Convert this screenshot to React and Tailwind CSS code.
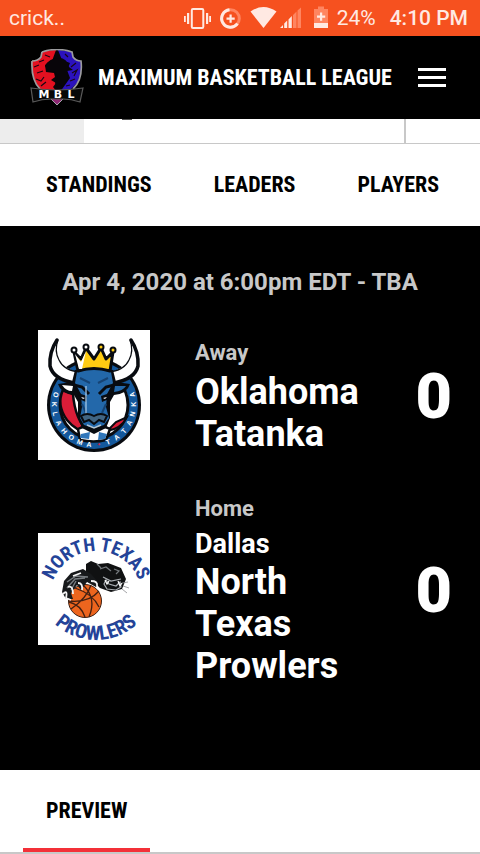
import React from "react";

const condensed =
  "font-['Roboto_Condensed','Liberation_Sans_Narrow',Roboto,sans-serif] font-bold text-[22px] leading-[26px] whitespace-nowrap";

function StatusIcons() {
  return (
    <svg width="146" height="36" viewBox="183 0 146 36" fill="#ffe9e2" aria-hidden="true">
      <rect x="191.8" y="9" width="11.5" height="19" rx="1.2" fill="none" stroke="#ffe9e2" strokeWidth="2" />
      <path d="M187 13h2.2v11h-2.2zM184 16h1.8v6h-1.8zM206 13h2.2v11h-2.2zM209.2 16h1.8v6h-1.8z" />
      <circle cx="230.5" cy="18.5" r="8.8" fill="none" stroke="#ff8560" strokeWidth="3" />
      <path d="M229.5 9.7a8.8 8.8 0 1 0 8 14" fill="none" stroke="#ffe9e2" strokeWidth="3" />
      <path d="M229.5 14.500h2.200v3h3v2.200h-3v3h-2.200v-3h-3v-2.200h3z" />
      <path d="M250.500 11.500Q263.500 2.500 276.500 11.500L263.500 28z" />
      <path d="M280 28l3-3v3zM284.200 28v-4.500l3-3V28zM288.500 28v-8.500l3.300-3.500v12z" />
      <path d="M293 28V15l3.500-3.500V28zM297.500 28V10.500l3.500-3V28z" fill="#ff8560" />
      <path d="M318 6.500h6V9h4v14h-14V9h4z" fill="#ff8560" />
      <path d="M314 23h14v5h-14zM320 12.500h2.200v3h3v2.200h-3v3H320v-3h-3v-2.200h3z" />
    </svg>
  );
}

function LeagueLogo() {
  return (
    <svg width="54" height="58" viewBox="0 0 54 58" role="img" aria-label="MBL">
      <defs>
        <clipPath id="shield">
          <path d="M12 3Q27-2 42 3L43 8Q46 12 51 12Q53 31 43 40L27 55L10 40Q1 31 2 12Q8 12 11 8z" />
        </clipPath>
      </defs>
      <g clipPath="url(#shield)">
        <path d="M0 0h54v58H0z" fill="#080509" />
        <path d="M10 2L26 1L22 12L15 16L16 23L24 24L25 28L21 31L26 34L23 38L27 43L12 43L2 28L1 11z" fill="#e31020" />
        <path d="M28 1L43 3L53 12L50 31L38 43L30 43L35 36L40 29L37 21L40 14L32 11z" fill="#2b12bd" />
        <path d="M15 17Q19 9 29 9Q37 9 39 18L43 21L37 22L38 30L32 38L29 34L27 38L25 34L28 28L25 23L18 22z" fill="#080509" />
        <path d="M4 18l5-2M7 24l6-2M6 30l5 2 3-4M11 37l5-4M15 6l5 2M9 13l5-2M41 18l5-4M42 24l5-3-3 6M40 32l5-2M36 37l4-1M35 5l3 3" fill="none" stroke="#180713" strokeWidth="1.200" />
      </g>
      <path d="M12 3Q27-2 42 3L43 8Q46 12 51 12Q53 31 43 40M2 12Q8 12 11 8L12 3M2 12Q1 31 10 40" fill="none" stroke="#9b9b9d" strokeWidth="1.700" />
      <path d="M20 49L27 56L34 49z" fill="#8e2873" stroke="#a4a4aa" />
      <path d="M1 39Q27 43 53 39L50 53Q41 50 33 50H21Q12 50 3 53z" fill="#080808" stroke="#5a5a5a" strokeWidth="1.200" />
      <text y="49" textAnchor="middle" fill="#fff" fontSize="11" fontWeight="700" fontFamily="DejaVu Sans, sans-serif">
        <tspan x="14">M</tspan><tspan x="28">B</tspan><tspan x="41">L</tspan>
      </text>
    </svg>
  );
}

function TatankaLogo() {
  const letters = "OKLAHOMA•TATANKA".split("");
  return (
    <svg width="112" height="130" viewBox="0 0 112 130" className="bg-white" role="img" aria-label="Oklahoma Tatanka">
      <circle cx="56" cy="75" r="47" fill="#080b10" />
      <circle cx="56" cy="75" r="39.500" fill="#fff" stroke="#14589c" strokeWidth="9" />
      <circle cx="56" cy="75" r="34" fill="#fff" stroke="#080b10" strokeWidth="3" />
      <path d="M25 60Q18 75 29 90Q38 101 51 103Q37 90 35 64z" fill="#d91d38" stroke="#080b10" strokeWidth="2.500" />
      <path d="M69 101Q83 99 89 87L78 92z" fill="#d91d38" stroke="#080b10" strokeWidth="2" />
      <path d="M40 99Q56 91 72 99L68 110Q56 113 42 110z" fill="#fff" stroke="#080b10" strokeWidth="2.500" />
      <path d="M43 104l9-2-1 7-9-1zM61 102l8 2-2 5-7 1z" fill="#3177bb" />
      <path d="M21 7Q10 19 11 36Q13 50 36 54L42 42Q27 41 21 29Q17 19 21 7zM91 7Q102 19 101 36Q99 50 76 54L70 42Q85 41 91 29Q95 19 91 7z" fill="#fff" />
      <path d="M19 10Q11 22 12 36Q15 49 36 53M93 10Q101 22 100 36Q97 49 76 53" fill="none" stroke="#080b10" strokeWidth="3.500" strokeLinecap="round" />
      <path d="M20 10Q16 21 21 30Q26 41 42 42M92 10Q96 21 91 30Q86 41 70 42" fill="none" stroke="#080b10" strokeWidth="1.200" />
      <path d="M37 40Q56 35 75 40L78 52L92 54Q89 64 76 65L72 72L72 88L68 98L56 104L44 98L40 88L40 72L36 65Q23 64 20 54L34 52z" fill="#080b10" />
      <path d="M39 42Q56 37 73 42L75 53L69 64L68 77L71 88L66 95L56 98L46 95L42 88L44 77L43 64L37 53z" fill="#2368aa" />
      <path d="M24 55L35 56L34 61Q28 61 24 55z" fill="#fff" />
      <path d="M77 56L88 56Q85 61 76 62z" fill="#2368aa" />
      <path d="M36 55l8 2 7 7M76 55l-8 2-7 7" fill="none" stroke="#080b10" strokeWidth="3" />
      <path d="M40 63l9 3-1 6-7-3zM72 63l-9 3 1 6 7-3z" fill="#080b10" />
      <path d="M43 67l4 1-2 1zM69 67l-4 1 2 1z" fill="#fff" />
      <path d="M42 48l10 5M70 48l-10 5M44 74l4 9M68 74l-4 9" stroke="#164475" strokeWidth="2" />
      <path d="M48 56v28" stroke="#a2c7e6" strokeWidth="1.300" />
      <path d="M43 86Q49 82 56 86Q63 82 69 86L66 92L61 90L56 94L51 90L46 92z" fill="#416583" stroke="#080b10" strokeWidth="2" />
      <path d="M49 95l7 3 7-3" fill="none" stroke="#b4c5d1" strokeWidth="1.500" />
      <path d="M36 22L43 29L48 18L56 29L63 18L68 29L75 22L72 41Q56 36 40 41z" fill="#ffcc12" stroke="#080b10" strokeWidth="3" strokeLinejoin="round" />
      <path d="M37 24L43 32L48 21L44 39L41 39z" fill="#fff" />
      <g fill="#fff" stroke="#080b10" strokeWidth="2">
        <circle cx="36" cy="20" r="2.500" />
        <circle cx="48" cy="17" r="2.500" />
        <circle cx="63" cy="17" r="2.500" fill="#ffcc12" />
        <circle cx="75" cy="20" r="2.500" fill="#ffcc12" />
      </g>
      <g fontSize="7" fontWeight="700" fontFamily="Liberation Sans, sans-serif" textAnchor="middle">
        {letters.map((letter, i) => (
          <text key={i} x="56" y="117" fill={letter === "•" ? "#d91d38" : "#fff"} transform={`rotate(${105 - i * 14} 56 75)`}>
            {letter}
          </text>
        ))}
      </g>
    </svg>
  );
}

function ProwlersLogo() {
  return (
    <svg width="112" height="112" viewBox="0 0 112 112" className="bg-white" role="img" aria-label="North Texas Prowlers">
      <defs>
        <path id="northArc" d="M12 64A46 46 0 0 1 104 64" />
        <path id="prowlersArc" d="M-3 46A61 61 0 0 0 119 46" />
      </defs>
      <g fill="#244398" fontWeight="700" textAnchor="middle">
        <text fontSize="19" fontFamily="Roboto Condensed, Liberation Sans Narrow, Roboto, sans-serif">
          <textPath href="#northArc" startOffset="50%">NORTH TEXAS</textPath>
        </text>
        <text fontSize="20" fontFamily="Roboto Condensed, Liberation Sans Narrow, Roboto, sans-serif">
          <textPath href="#prowlersArc" startOffset="50%">PROWLERS</textPath>
        </text>
      </g>
      <path d="M48 31L53 28L60 31L70 30L83 35L88 46L84 56L73 59L62 55L55 48L48 43z" fill="#101112" />
      <path d="M62 36l6-2 5 4M76 36l5 2-3 3M59 31l4 4" fill="none" stroke="#74797d" strokeWidth="1.200" />
      <path d="M65 44l8 4 10-2M66 51l2-4 3 4 7 2 4-4 1 5-5 3-9-1z" fill="none" stroke="#aaaeb2" strokeWidth="1.200" />
      <path d="M67 47l2 4 2-3M80 48l2 5 2-3" fill="none" stroke="#fff" strokeWidth="1.200" />
      <path d="M84 50l6-1M85 53l6 2M84 56l5 4" stroke="#8b8d90" strokeWidth=".8" />
      <circle cx="47" cy="68" r="16.500" fill="#ed651e" stroke="#3c2116" />
      <path d="M31 68Q51 70 61 58M37 55Q55 61 61 74M45 52Q59 65 51 84M33 76Q49 65 53 52M47 84Q43 72 31 69" fill="none" stroke="#432012" strokeWidth="1.300" />
      <path d="M24 59L26 48L33 40L45 36L53 41L60 49L58 54L49 49L43 57L39 52L33 60L35 66L28 66z" fill="#17191b" />
      <path d="M29 49l9-6 12 1M29 55l8-9 10-1M33 57l5-9" fill="none" stroke="#777c80" strokeWidth="1.400" />
      <path d="M25 61q5-5 3 4l5 2M30 54q5-2 5 7M40 50q5 0 4 7M53 48q7 0 6 5M35 43l8-3" fill="none" stroke="#f4f4f4" strokeWidth="1.800" />
    </svg>
  );
}

function Team({ logo, side, city, name, score }) {
  return (
    <article className="flex items-center pl-[38px] pr-7">
      <div className="w-[157px] shrink-0">{logo}</div>
      <div className="min-w-0 flex-1">
        <p className="text-[22px] leading-[36px] text-[#c8c8c8]">{side}</p>
        {city && <p className="text-[27px] leading-[34px]">{city}</p>}
        <h2 className="w-min text-[36px] leading-[42px]">{name}</h2>
      </div>
      <strong className="pt-1 text-[63px] leading-[72px]">{score}</strong>
    </article>
  );
}

export default function App() {
  return (
    <div className="min-h-screen bg-white font-[Roboto,sans-serif] text-black">
      <div className="flex h-9 items-center bg-[#f6511f] pl-[9px] pr-3 text-[21px] leading-6 text-[#ffe9e2]">
        <span className="flex-1">crick..</span>
        <StatusIcons />
        <span className="ml-2">24%</span>
        <span className="ml-[14px] font-medium">4:10 PM</span>
      </div>
      <header className="flex h-[83px] items-center bg-black pl-[30px] pr-[34px] text-white">
        <LeagueLogo />
        <h1 className={`ml-[14px] flex-1 ${condensed}`}>MAXIMUM BASKETBALL LEAGUE</h1>
        <button type="button" aria-label="Menu" className="flex w-7 flex-col gap-[5px]">
          <span className="h-[3px] bg-white" />
          <span className="h-[3px] bg-white" />
          <span className="h-[3px] bg-white" />
        </button>
      </header>
      <div className="flex h-[25px] border-b border-[#c8c8c8]">
        <div className="w-[84px] bg-[#ededed]" />
        <div className="flex flex-1 justify-start border-r-2 border-[#c8c8c8] pl-[38px]">
          <span className="h-px w-[10px] bg-[#555]" />
        </div>
        <div className="w-[74px]" />
      </div>
      <nav className={`flex h-[82px] items-center gap-[62px] overflow-hidden pl-[46px] ${condensed}`}>
        <a href="#standings">STANDINGS</a>
        <a href="#leaders">LEADERS</a>
        <a href="#players">PLAYERS</a>
      </nav>
      <main className="bg-black pb-[83px] pt-10 font-bold text-white">
        <p className="text-center text-[24px] leading-8 text-[#c8c8c8]">Apr 4, 2020 at 6:00pm EDT - TBA</p>
        <div className="mt-8 flex flex-col gap-[31px]">
          <Team logo={<TatankaLogo />} side="Away" name="Oklahoma Tatanka" score={0} />
          <Team logo={<ProwlersLogo />} side="Home" city="Dallas" name="North Texas Prowlers" score={0} />
        </div>
      </main>
      <div className="flex h-[84px] border-b-2 border-[#c8c8c8] pl-[23px]">
        <button type="button" className={`border-b-4 border-[#f33038] px-[23px] pt-1 ${condensed}`}>PREVIEW</button>
      </div>
    </div>
  );
}
